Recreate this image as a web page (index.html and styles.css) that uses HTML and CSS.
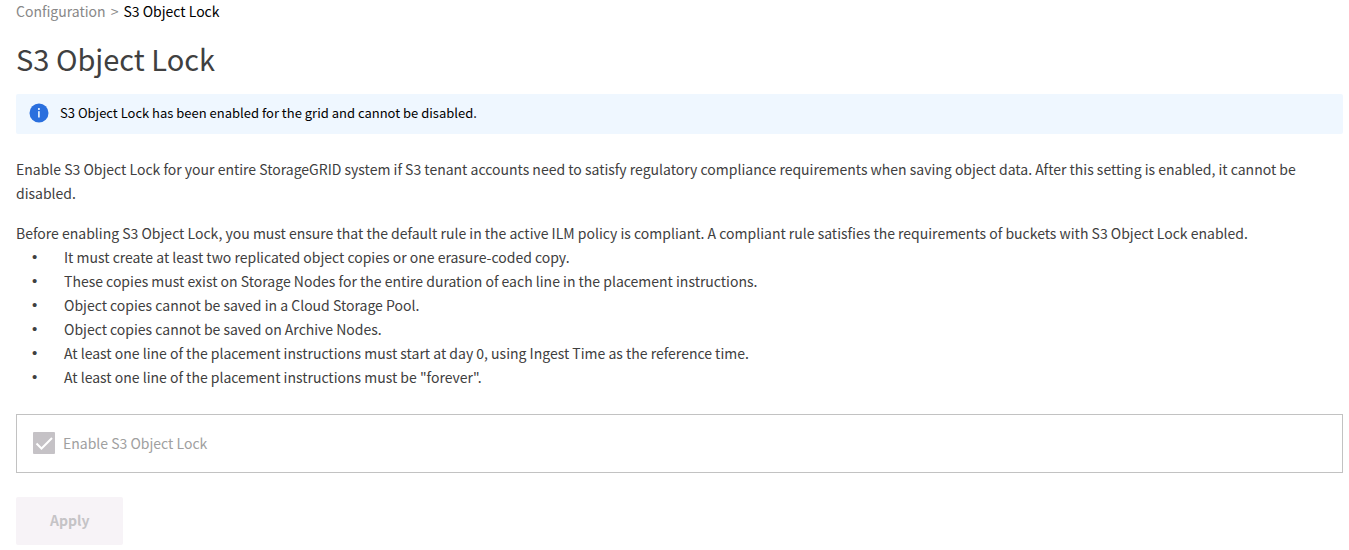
FILE: index.html
```html
<!DOCTYPE html>
<html lang="en">
<head>
<meta charset="utf-8">
<meta name="viewport" content="width=device-width, initial-scale=1">
<title>S3 Object Lock</title>
<link rel="stylesheet" href="styles.css">
</head>
<body>
<main class="page">
  <nav class="breadcrumb" aria-label="Breadcrumb">
    <a class="breadcrumb-link" href="#">Configuration</a>
    <span class="breadcrumb-separator">&gt;</span>
    <span class="breadcrumb-current" aria-current="page">S3 Object Lock</span>
  </nav>
  <h1 class="title">S3 Object Lock</h1>
  <div class="notice" role="status">
    <svg class="notice-icon" viewBox="0 0 20 20" aria-hidden="true">
      <circle cx="10" cy="10" r="9.5" fill="#2a6fde"/>
      <rect x="9" y="8.2" width="1.8" height="6.3" fill="#d9e8fc"/>
      <rect x="9" y="5" width="1.8" height="2" fill="#d9e8fc"/>
    </svg>
    <span>S3 Object Lock has been enabled for the grid and cannot be disabled.</span>
  </div>
  <p class="text">Enable S3 Object Lock for your entire StorageGRID system if S3 tenant accounts need to satisfy regulatory compliance requirements when saving object data. After this setting is enabled, it cannot be disabled.</p>
  <p class="text text-lead">Before enabling S3 Object Lock, you must ensure that the default rule in the active ILM policy is compliant. A compliant rule satisfies the requirements of buckets with S3 Object Lock enabled.</p>
  <ul class="rules">
    <li class="rule">It must create at least two replicated object copies or one erasure-coded copy.</li>
    <li class="rule">These copies must exist on Storage Nodes for the entire duration of each line in the placement instructions.</li>
    <li class="rule">Object copies cannot be saved in a Cloud Storage Pool.</li>
    <li class="rule">Object copies cannot be saved on Archive Nodes.</li>
    <li class="rule">At least one line of the placement instructions must start at day 0, using Ingest Time as the reference time.</li>
    <li class="rule">At least one line of the placement instructions must be "forever".</li>
  </ul>
  <form class="form">
    <div class="panel">
      <span class="check">
        <input class="check-input" type="checkbox" id="enable-lock" checked disabled>
        <svg class="check-mark" viewBox="0 0 22 22" aria-hidden="true">
          <path d="M3.5 11.5 L8.5 16.5 L19 6" fill="none" stroke="#fff" stroke-width="2"/>
        </svg>
      </span>
      <label class="check-label" for="enable-lock">Enable S3 Object Lock</label>
    </div>
    <button class="apply" type="submit" disabled>Apply</button>
  </form>
</main>
</body>
</html>
```
FILE: styles.css
```css
* {
  box-sizing: border-box;
}

body {
  margin: 0;
  background: #fff;
  color: #404040;
  font-family: "Source Sans Pro", "Noto Sans CJK SC", sans-serif;
  font-size: 14px;
  line-height: 24px;
}

.page {
  padding: 0 6px 4px 16px;
}

.breadcrumb {
  display: flex;
  gap: 5px;
  color: #888;
  line-height: 22px;
}

.breadcrumb-link {
  color: inherit;
  text-decoration: none;
}

.breadcrumb-current {
  color: #000;
}

.title {
  margin: 16px 0;
  font-size: 29px;
  font-weight: 400;
  line-height: 40px;
}

.notice {
  display: flex;
  align-items: center;
  gap: 11px;
  min-height: 40px;
  padding: 7px 13px 9px;
  border-radius: 2px;
  background: #eff7ff;
  color: #000;
  font-size: 13px;
}

.notice-icon {
  flex: none;
  width: 20px;
  height: 20px;
}

.text {
  margin: 23px 0 16px;
}

.text-lead {
  margin: 0;
}

.rules {
  margin: 0;
  padding: 0 0 0 16px;
  list-style: none;
}

.rule {
  display: flex;
}

.rule::before {
  content: "\2022";
  flex: none;
  width: 32px;
  font-family: "Liberation Sans", sans-serif;
  font-size: 15px;
}

.form {
  margin-top: 25px;
}

.panel {
  display: flex;
  align-items: center;
  gap: 8px;
  padding: 16px 16px 17px;
  border: 1px solid #c2c2c2;
}

.check {
  display: grid;
  width: 22px;
  height: 22px;
}

.check-input {
  grid-area: 1 / 1;
  appearance: none;
  margin: 0;
  border-radius: 1px;
  background: #c5c2c6;
}

.check-mark {
  grid-area: 1 / 1;
  pointer-events: none;
}

.check-label {
  color: #a0a0a0;
}

.apply {
  display: block;
  min-height: 48px;
  margin-top: 24px;
  padding: 11px 34px 13px;
  border: 0;
  border-radius: 2px;
  background: #f7f3f7;
  color: #c5c3c6;
  font: inherit;
  font-weight: 700;
}
```
